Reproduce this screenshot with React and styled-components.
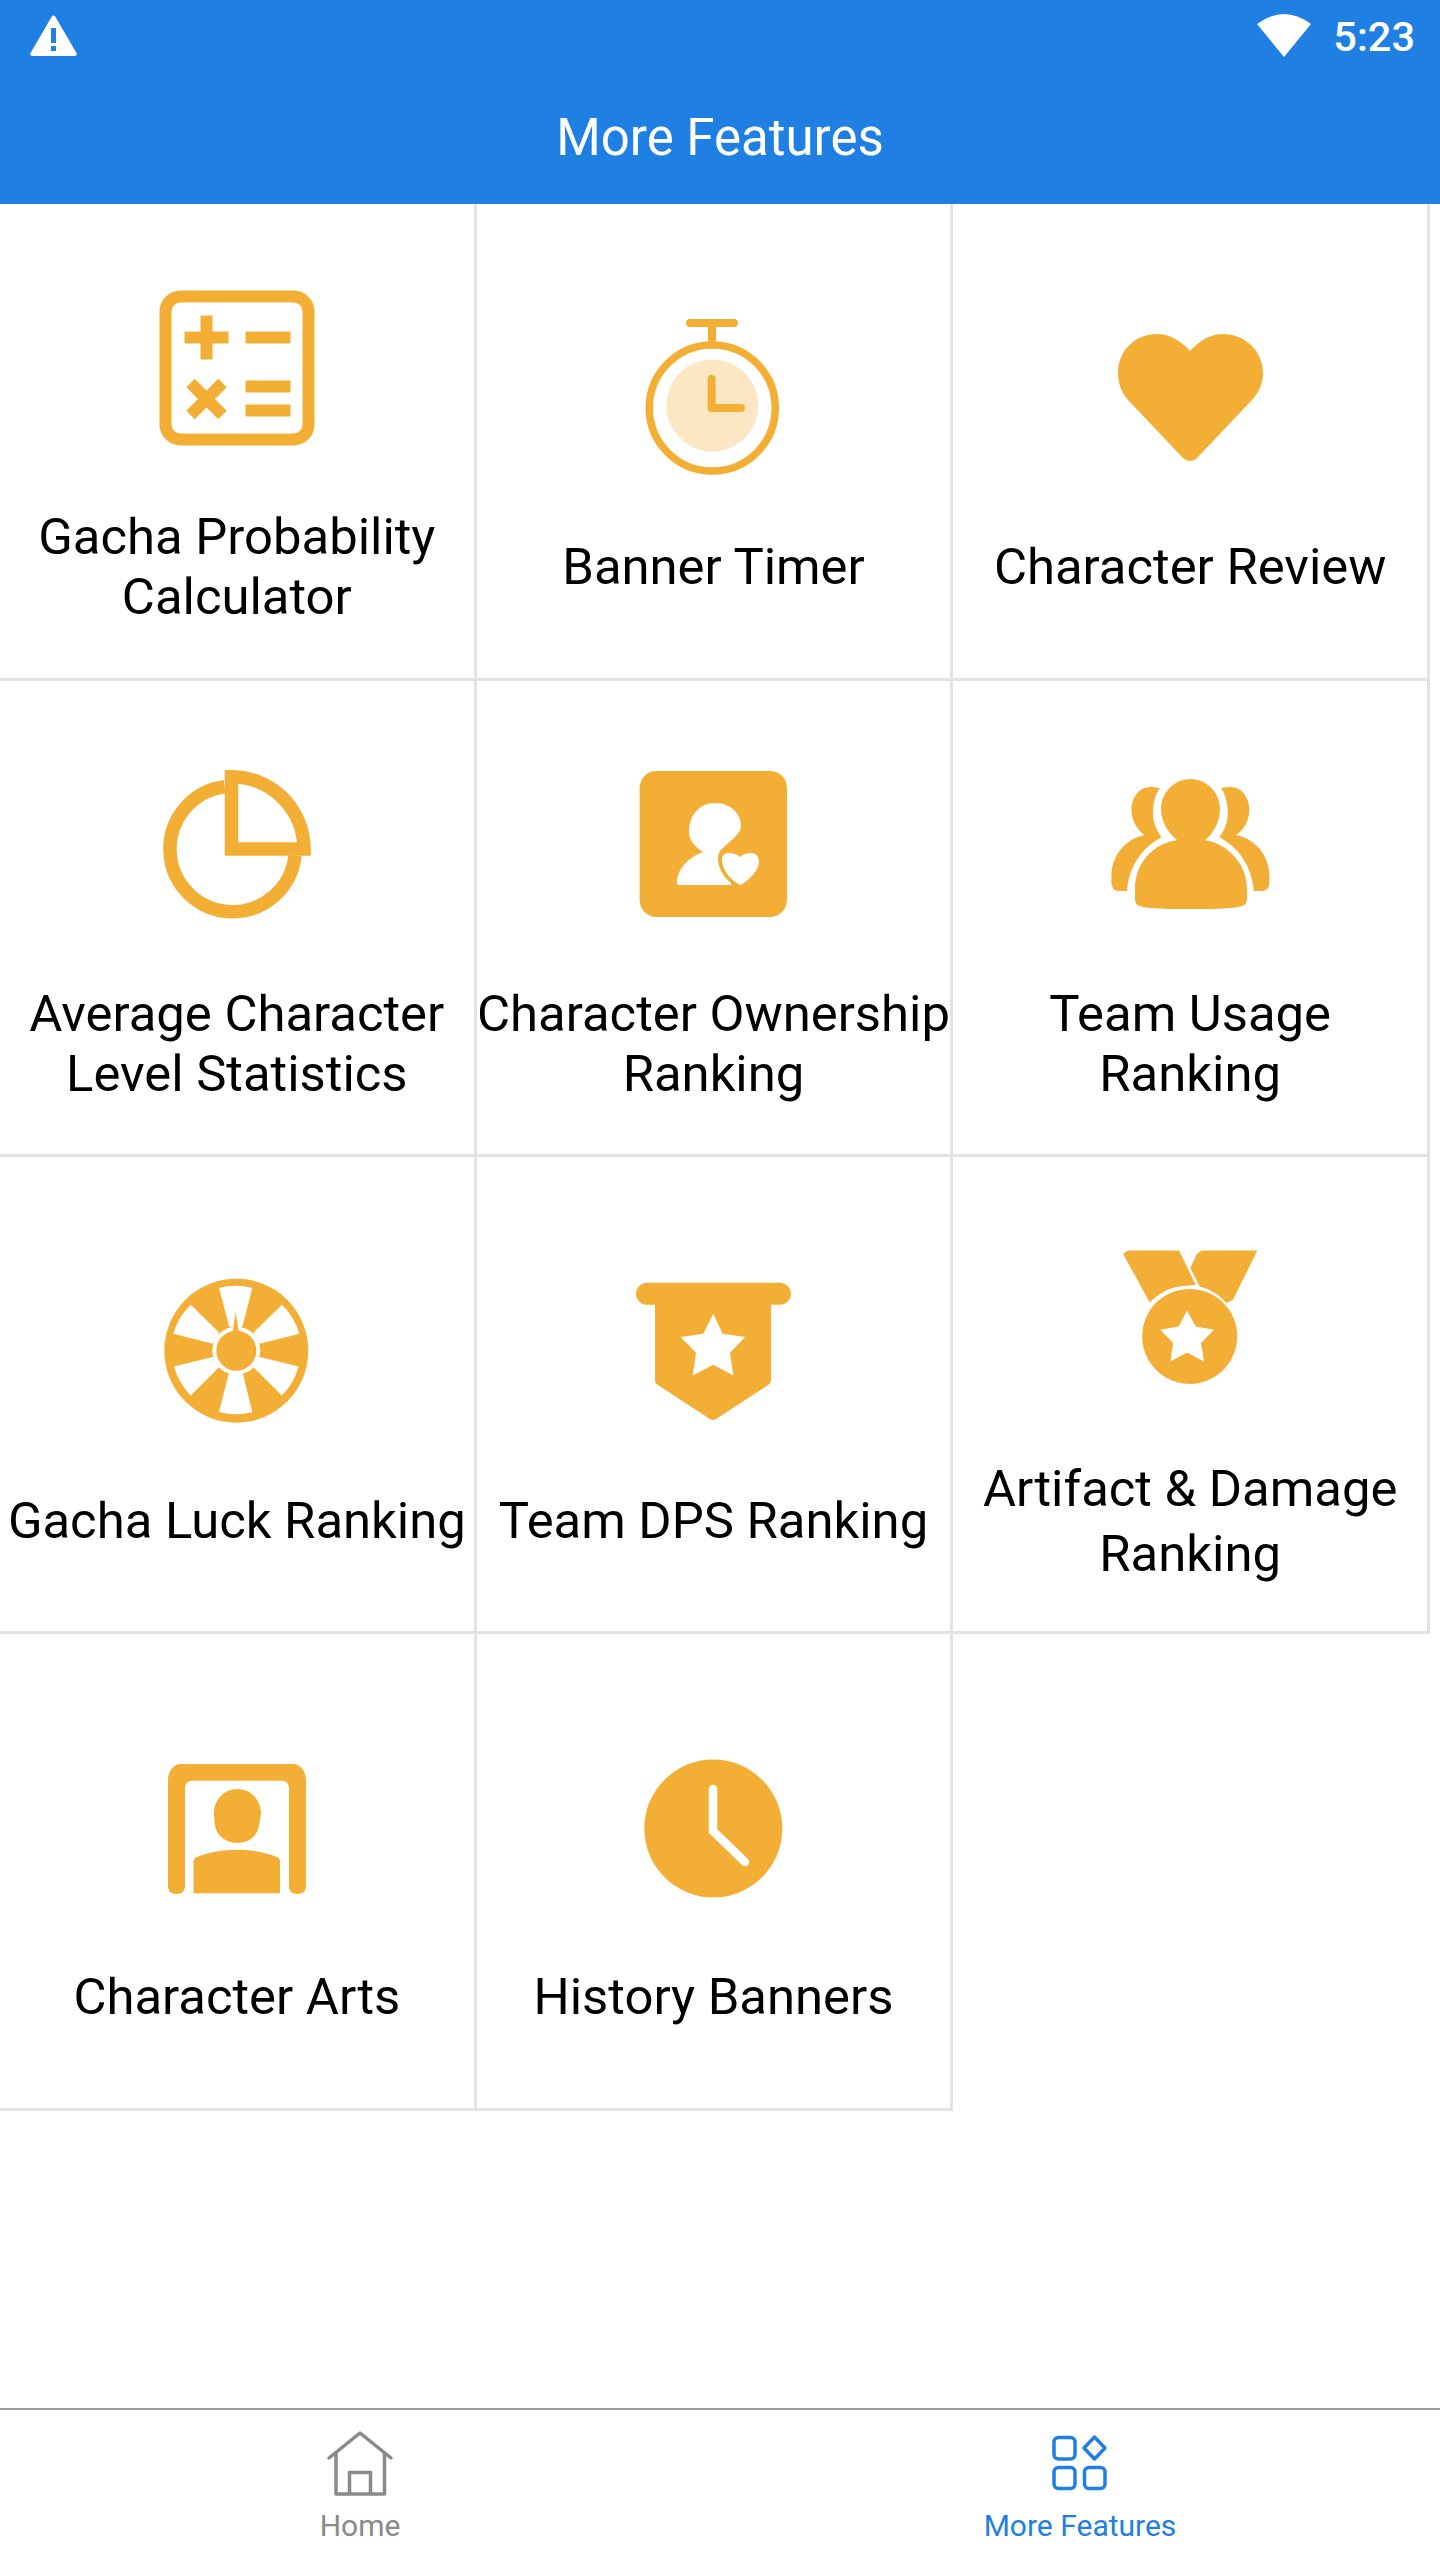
import React from "react";
import styled, { createGlobalStyle } from "styled-components";

const GOLD = "#f3af35";

const GlobalStyle = createGlobalStyle`
  html, body { margin: 0; padding: 0; background: #fff; }
  body { font-family: Roboto, "Liberation Sans", sans-serif; }
`;

const Page = styled.div`
  width: 1440px;
  height: 2560px;
  display: flex;
  flex-direction: column;
  background: #fff;
`;

const Header = styled.header`
  height: 204px;
  flex: none;
  background: #1f7fe2;
  color: #fff;
  display: flex;
  flex-direction: column;
`;

const StatusBar = styled.div`
  height: 74px;
  flex: none;
  padding: 0 25px 0 30px;
  display: flex;
  align-items: center;
  justify-content: space-between;
`;

const WarningIcon = styled.svg`
  display: block;
  margin-bottom: 4px;
`;

const WifiIcon = styled.svg`
  display: block;
  margin-bottom: 3px;
`;

const StatusRight = styled.div`
  display: flex;
  align-items: center;
  gap: 22px;
`;

const Clock = styled.span`
  font-size: 41.5px;
  line-height: 74px;
  font-weight: 500;
`;

const Title = styled.h1`
  margin: 0;
  height: 126px;
  display: flex;
  align-items: center;
  justify-content: center;
  font-size: 51px;
  font-weight: 400;
`;

const Grid = styled.main`
  width: 1430px;
  display: grid;
  grid-template-columns: repeat(3, 476.67px);
  grid-auto-rows: 476.67px;
`;

const Cell = styled.div`
  box-sizing: border-box;
  border-right: 3px solid #e3e3e3;
  border-bottom: 3px solid #e3e3e3;
  display: flex;
  flex-direction: column;
  align-items: center;
  justify-content: center;
  gap: 26px;
`;

const IconBox = styled.div`
  height: 227px;
  flex: none;
  display: flex;
  align-items: center;
  justify-content: center;
  svg { display: block; width: 160px; height: 160px; }
`;

const Label = styled.div`
  font-size: 50.8px;
  line-height: ${(p) => p.$line || 60}px;
  color: #000;
  text-align: center;
  white-space: pre;
`;

const Spacer = styled.div`
  flex: 1;
`;

const TabBar = styled.nav`
  height: 152px;
  flex: none;
  box-sizing: border-box;
  border-top: 2px solid #9b9b9b;
  display: grid;
  grid-template-columns: 1fr 1fr;
`;

const Tab = styled.div`
  display: flex;
  flex-direction: column;
  align-items: center;
  padding-top: 20px;
  color: ${(p) => (p.$active ? "#1f7fe2" : "#8a8a8a")};
  svg { display: block; width: 68px; height: 68px; }
`;

const TabLabel = styled.span`
  font-size: 30px;
  line-height: 34px;
  margin-top: 11px;
`;

// all feature icons are drawn in a 160 box, 80,80 is the middle of it
const CalculatorIcon = () => (
  <svg viewBox="0 0 160 160">
    <g transform="translate(2.5 2.5)">
      <rect x="6" y="6" width="143" height="143" rx="15" fill="none" stroke={GOLD} strokeWidth="12" />
      <path fill={GOLD} d="M41 25h12v16h16v12H53v16H41V53H25V41h16zM86 41h45v12H86zM86 90h45v12H86zM86 114h45v12H86z" />
      <path fill="none" stroke={GOLD} strokeWidth="12" d="M31 92.5l32 32M63 92.5l-32 32" />
    </g>
  </svg>
);

const TimerIcon = () => (
  <svg viewBox="0 0 160 160">
    <circle cx="79.3" cy="87.5" r="46" fill="#fbe7c4" />
    <circle cx="79.3" cy="90" r="63" fill="none" stroke={GOLD} strokeWidth="7.5" />
    <path fill="none" stroke={GOLD} strokeWidth="8" strokeLinecap="round" strokeLinejoin="round" d="M57 5h44M79 5v16M78.6 61v29h29.4" />
  </svg>
);

const HeartIcon = () => (
  <svg viewBox="0 0 160 160">
    <path fill={GOLD} d="M80 33C71 23 60 16 47 16 25 16 8 33 8 55c0 11 4 21 11 28l53 56q8 8 16 0l53-56c7-7 12-17 12-28 0-22-18-39-40-39-13 0-24 7-33 17z" />
  </svg>
);

const PieIcon = () => (
  <svg viewBox="0 0 160 160">
    <path fill="none" stroke={GOLD} strokeWidth="13.5" d="M67.6 22.8A62.7 62.7 0 1 0 138 91.6" />
    <path fill="none" stroke={GOLD} strokeWidth="13.5" d="M74.5 12.7A72.5 72.5 0 0 1 147 85H74.5z" />
  </svg>
);

const OwnerIcon = () => (
  <svg viewBox="0 0 160 160">
    <rect x="6.6" y="7" width="147.4" height="146" rx="17" fill={GOLD} />
    <path fill="#fff" d="M82 39C66 39 56 52 56 68c0 8 6 15 14 20-16 6-26 18-26 31q0 2 3 2h51v-2c-8-6-13-16-13-24 0-5 2-9 5-11 8-8 18-14 18-22 0-12-10-23-26-23z" />
    <path fill="#fff" d="M107 121C97 116 89 105 89 96c0-5 3-7 6-7 5 0 9 1 12 4 3-3 7-4 11-4 5 0 8 3 8 9 0 8-10 19-19 23z" />
  </svg>
);

const SIDE_PERSON = "M49.7 24C46 23 42 23 40 23 29 23 21.4 34 21.4 46c0 10 5.6 20 13.3 25C15 75 1.4 92 1.4 112v6c0 7 3.6 9 8.6 9h7c2-25 15-43 34.4-54-5.4-7-8.4-15-8.4-24 0-9 2-18 6.7-25z";

const TeamIcon = () => (
  <svg viewBox="0 0 160 160">
    <path fill={GOLD} d="M80.4 15C64 15 51 29 51 45c0 13 8 25 16 31-25 4-42 24-42 49v10c0 7 5 8 15 9 10 1 25 1 40.4 1 15.6 0 30.6 0 40.6-1 10-1 16-2 16-9v-10c0-25-19-45-42-49 8-6 15-18 15-31 0-16-13-30-29.6-30z" />
    <path fill={GOLD} d={SIDE_PERSON} />
    <path fill={GOLD} d={SIDE_PERSON} transform="matrix(-1 0 0 1 160.8 0)" />
  </svg>
);

const WheelIcon = () => (
  <svg viewBox="0 0 160 160">
    <circle cx="79.3" cy="79.7" r="72" fill={GOLD} />
    <g fill="#fff">
      <path d="M62 17A64.6 64.6 0 0 1 95.3 17L85.3 56H72.3z" />
      <path d="M62 141A64.6 64.6 0 0 0 95.3 141L85.3 100.4H72.3z" />
      <path d="M33.7 33.7A64.6 64.6 0 0 0 16.3 62.7L55.7 72.7 62.3 61.7z" />
      <path d="M124.9 33.7A64.6 64.6 0 0 1 142.3 62.7L102.9 72.7 96.3 61.7z" />
      <path d="M17 95.4A64.6 64.6 0 0 0 33.7 124.4L62.3 96 55.7 86z" />
      <path d="M141.6 95.4A64.6 64.6 0 0 1 124.9 124.4L96.3 96 102.9 86z" />
    </g>
    <circle cx="79.3" cy="79.7" r="24" fill="#fff" />
    <circle cx="79.3" cy="79.7" r="20" fill={GOLD} />
    <path fill={GOLD} d="M75.5 62L78.7 41 82 62z" />
  </svg>
);

const BannerIcon = () => (
  <svg viewBox="0 0 160 160">
    <path fill={GOLD} d="M14 11.7h133c6 0 11 5 11 11s-5 11-11 11h-9v75c0 3-1 4-4 6l-49 32c-3 3-7 3-10 0l-49-32c-3-2-4-3-4-6V33.7h-8c-6 0-11-5-11-11s5-11 11-11z" />
    <path fill="#fff" d="M80.3 42.7L89.6 62.7 112.3 66 97 81.7 100.3 104.4 80.3 93.7 59.7 104.4 63 81.7 47.6 66 70.3 62.7z" />
  </svg>
);

const MedalIcon = () => (
  <svg viewBox="0 0 160 160">
    <path fill={GOLD} d="M13 17.7L18 14.4H69L85.7 48.7 69.7 50.4C58 52 48 58 39.7 66.4z" />
    <path fill={GOLD} d="M91.4 14.4H147.4L123 63.7 116.4 67C110 59 100 53 89.7 50.4L80.4 32 86.4 18.7z" />
    <circle cx="79.7" cy="100.4" r="47.5" fill={GOLD} />
    <path fill="#fff" d="M77 74.4L85.7 90.4 104 93.7 91 107 94 125.4 77 116.4 60.4 125.4 63 107 50.4 93.7 68.7 90.4z" />
  </svg>
);

const ArtsIcon = () => (
  <svg viewBox="0 0 160 160">
    <path fill={GOLD} d="M24 16H136C144 16 149 24 149 32V138C149 143 146 146 140.5 146 135 146 132 143 132 138V41C132 35 129 32.7 124 32.7H36C31 32.7 28 35 28 41V138C28 143 25 146 19.5 146 14 146 11 143 11 138V32C11 24 16 16 24 16z" />
    <path fill={GOLD} d="M80.3 41C66 41 56.7 53 56.7 66L58 78C60 88 69 95 80.3 95 92 95 100 88 102 78L104 66C104 53 95 41 80.3 41z" />
    <path fill={GOLD} d="M36.5 114C36.5 111 38 110 40 109 52 104 66 101.7 80 101.7 94 101.7 108 104 120 109 122 110 123 111 123 114V145.3H36.5z" />
  </svg>
);

const HistoryIcon = () => (
  <svg viewBox="0 0 160 160">
    <circle cx="80.3" cy="80.5" r="69" fill={GOLD} />
    <path fill="none" stroke="#fff" strokeWidth="8.5" strokeLinecap="round" d="M80 41v42l32 31" />
  </svg>
);

const HomeIcon = () => (
  <svg viewBox="0 0 68 68" fill="none" stroke="currentColor" strokeWidth="3.5">
    <path strokeLinecap="round" strokeLinejoin="round" d="M3 28L34 3l31 25" />
    <path strokeLinejoin="round" d="M10 22v42h48.5V22M23.5 64V42.5h21V64" />
  </svg>
);

const FeaturesIcon = () => (
  <svg viewBox="0 0 68 68" fill="none" stroke="currentColor" strokeWidth="3.5">
    <rect x="8" y="7.5" width="21" height="21.5" rx="4.5" />
    <rect x="8" y="37.5" width="21" height="21" rx="4.5" />
    <rect x="38.5" y="37.5" width="20.5" height="21" rx="4.5" />
    <path strokeLinejoin="round" d="M48.5 7l10.5 11-10.5 11L38 18z" />
  </svg>
);

const FEATURES = [
  { Icon: CalculatorIcon, label: "Gacha Probability\nCalculator" },
  { Icon: TimerIcon, label: "Banner Timer" },
  { Icon: HeartIcon, label: "Character Review" },
  { Icon: PieIcon, label: "Average Character\nLevel Statistics" },
  { Icon: OwnerIcon, label: "Character Ownership\nRanking" },
  { Icon: TeamIcon, label: "Team Usage\nRanking" },
  { Icon: WheelIcon, label: "Gacha Luck Ranking" },
  { Icon: BannerIcon, label: "Team DPS Ranking" },
  { Icon: MedalIcon, label: "Artifact & Damage\nRanking", line: 65 },
  { Icon: ArtsIcon, label: "Character Arts" },
  { Icon: HistoryIcon, label: "History Banners" },
];

export default function App() {
  return (
    <Page>
      <GlobalStyle />
      <Header>
        <StatusBar>
          <WarningIcon width="47" height="41" viewBox="0 0 47 41">
            <path fill="#fff" fillRule="evenodd" d="M21.8 1.5q1.7-2 3.4 0L46.5 38q1 3-2 3H2.5q-3 0-2-3zM21 13v15h5V13zM21 31v5h5v-5z" />
          </WarningIcon>
          <StatusRight>
            <WifiIcon width="54" height="43" viewBox="0 0 54 43">
              <path fill="#fff" d="M0 10Q27-10 54 10L27 43z" />
            </WifiIcon>
            <Clock>5:23</Clock>
          </StatusRight>
        </StatusBar>
        <Title>More Features</Title>
      </Header>
      <Grid>
        {FEATURES.map(({ Icon, label, line }) => (
          <Cell key={label}>
            <IconBox>
              <Icon />
            </IconBox>
            <Label $line={line}>{label}</Label>
          </Cell>
        ))}
      </Grid>
      <Spacer />
      <TabBar>
        <Tab>
          <HomeIcon />
          <TabLabel>Home</TabLabel>
        </Tab>
        <Tab $active>
          <FeaturesIcon />
          <TabLabel>More Features</TabLabel>
        </Tab>
      </TabBar>
    </Page>
  );
}
